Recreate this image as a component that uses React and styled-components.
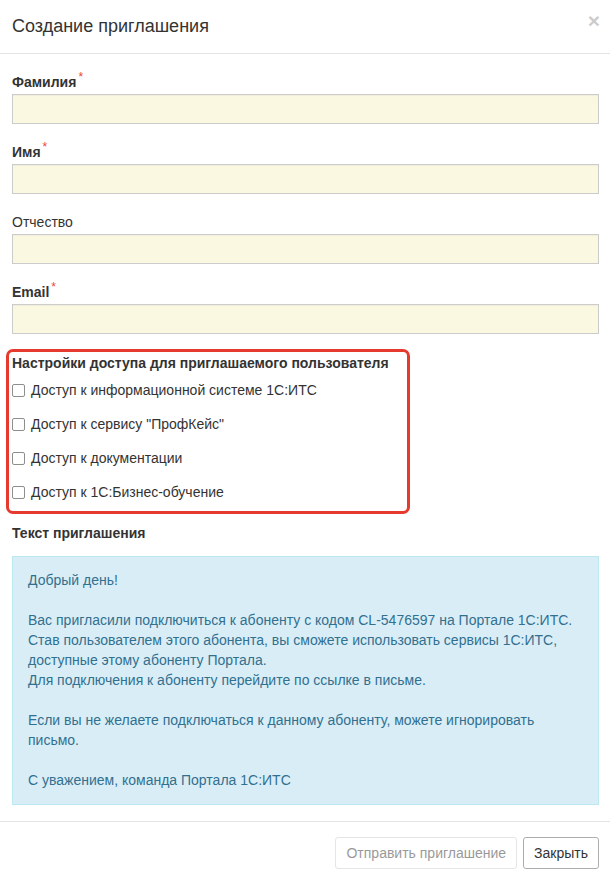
import React, { useState } from 'react';
import styled, { createGlobalStyle } from 'styled-components';

const GlobalStyle = createGlobalStyle`
  body {
    margin: 0;
    background: #fff;
    font-family: "Liberation Sans", Arial, sans-serif;
    font-size: 14px;
    color: #333;
  }
  * { box-sizing: border-box; }
`;

const fields = [
  { id: 'lastName', label: 'Фамилия', required: true },
  { id: 'firstName', label: 'Имя', required: true },
  { id: 'middleName', label: 'Отчество', required: false },
  { id: 'email', label: 'Email', required: true },
];

const accessOptions = [
  'Доступ к информационной системе 1С:ИТС',
  'Доступ к сервису "ПрофКейс"',
  'Доступ к документации',
  'Доступ к 1С:Бизнес-обучение',
];

const App = () => {
  const [access, setAccess] = useState(accessOptions.map(() => false));

  const toggle = (index) => {
    setAccess(access.map((v, i) => (i === index ? !v : v)));
  };

  return (
    <Modal>
      <GlobalStyle />
      <Header>
        <Title>Создание приглашения</Title>
        <CloseButton type="button">×</CloseButton>
      </Header>
      <Body>
        {fields.map(field => (
          <FormGroup key={field.id}>
            <Label htmlFor={field.id} bold={field.required}>
              {field.label}
              {field.required && <Required>*</Required>}
            </Label>
            <Input id={field.id} type="text" />
          </FormGroup>
        ))}

        <AccessBox>
          <SectionTitle>Настройки доступа для приглашаемого пользователя</SectionTitle>
          <CheckList>
            {accessOptions.map((option, i) => (
              <CheckRow key={option}>
                <Checkbox type="checkbox" checked={access[i]} onChange={() => toggle(i)} />
                {option}
              </CheckRow>
            ))}
          </CheckList>
        </AccessBox>

        <MessageTitle>Текст приглашения</MessageTitle>
        <InfoAlert>
          <p>Добрый день!</p>
          <p>
            Вас пригласили подключиться к абоненту с кодом CL-5476597 на Портале 1С:ИТС.
            <br />
            Став пользователем этого абонента, вы сможете использовать сервисы 1С:ИТС, доступные этому абоненту Портала.
            <br />
            Для подключения к абоненту перейдите по ссылке в письме.
          </p>
          <p>Если вы не желаете подключаться к данному абоненту, можете игнорировать письмо.</p>
          <p>С уважением, команда Портала 1С:ИТС</p>
        </InfoAlert>
      </Body>
      <Footer>
        <Button disabled>Отправить приглашение</Button>
        <Button>Закрыть</Button>
      </Footer>
    </Modal>
  );
};

const Modal = styled.div`
  width: 610px;
  background: #fff;
`;

const Header = styled.div`
  display: flex;
  align-items: center;
  justify-content: space-between;
  height: 54px;
  padding: 0 10px 0 12px;
  border-bottom: 1px solid #e5e5e5;
`;

const Title = styled.h4`
  margin: 0 0 2px;
  font-size: 18px;
  font-weight: normal;
  line-height: 24px;
  color: #333;
`;

const CloseButton = styled.button`
  padding: 0;
  margin: 0 0 12px;
  background: transparent;
  border: none;
  font-family: "Liberation Sans", Arial, sans-serif;
  font-size: 21px;
  font-weight: bold;
  line-height: 1;
  color: #000;
  opacity: 0.2;
  cursor: pointer;
`;

const Body = styled.div`
  padding: 18px 11px 16px 12px;
`;

const FormGroup = styled.div`
  margin-bottom: 18px;
`;

const Label = styled.label`
  display: inline-block;
  margin-bottom: 2px;
  font-weight: ${props => (props.bold ? 'bold' : 'normal')};
  line-height: 20px;
  color: #333;
`;

const Required = styled.sup`
  margin-left: 2px;
  font-size: 12px;
  font-weight: normal;
  color: #e9483c;
  vertical-align: top;
  position: relative;
  top: -5px;
`;

const Input = styled.input`
  display: block;
  width: 100%;
  height: 30px;
  padding: 4px 10px;
  background: #faf8e1;
  border: 1px solid #cccccc;
  border-radius: 0;
  font-family: inherit;
  font-size: 14px;
  color: #555;
  box-shadow: inset 0 1px 1px rgba(0, 0, 0, 0.04);

  &:focus {
    outline: none;
    border-color: #66afe9;
  }
`;

const AccessBox = styled.div`
  width: 404px;
  margin: -3px 0 9px -6px;
  padding: 1px 3px 9px;
  border: 3px solid #e63a2e;
  border-radius: 7px;
`;

const SectionTitle = styled.div`
  font-weight: bold;
  line-height: 20px;
  color: #333;
`;

const CheckList = styled.div`
  display: flex;
  flex-direction: column;
  gap: 14px;
  margin-top: 7px;
`;

const CheckRow = styled.label`
  display: flex;
  align-items: center;
  gap: 6px;
  line-height: 20px;
  color: #333;
  cursor: pointer;
`;

const Checkbox = styled.input`
  appearance: none;
  width: 13px;
  height: 13px;
  margin: 0;
  border: 1px solid #8e8e8e;
  border-radius: 2px;
  background: #fff;
  flex-shrink: 0;

  &:checked {
    background: #0075ff;
    border-color: #0075ff;
  }
`;

const MessageTitle = styled.div`
  font-weight: bold;
  line-height: 20px;
  margin-bottom: 13px;
  color: #333;
`;

const InfoAlert = styled.div`
  padding: 13px 15px 14px;
  background: #d9edf7;
  border: 1px solid #bce8f1;
  color: #31708f;
  line-height: 20px;

  p {
    margin: 0 0 20px;
  }

  p:last-child {
    margin-bottom: 0;
  }
`;

const Footer = styled.div`
  display: flex;
  justify-content: flex-end;
  gap: 6px;
  padding: 15px 11px 15px 12px;
  border-top: 1px solid #e5e5e5;
`;

const Button = styled.button`
  height: 32px;
  padding: 0 10px;
  background: #fff;
  border: 1px solid #adadad;
  border-radius: 3px;
  font-family: "Liberation Sans", Arial, sans-serif;
  font-size: 14px;
  line-height: 20px;
  color: #333;
  cursor: pointer;

  &:disabled {
    border-color: #ccc;
    color: #333;
    opacity: 0.5;
    cursor: not-allowed;
  }
`;

export default App;
